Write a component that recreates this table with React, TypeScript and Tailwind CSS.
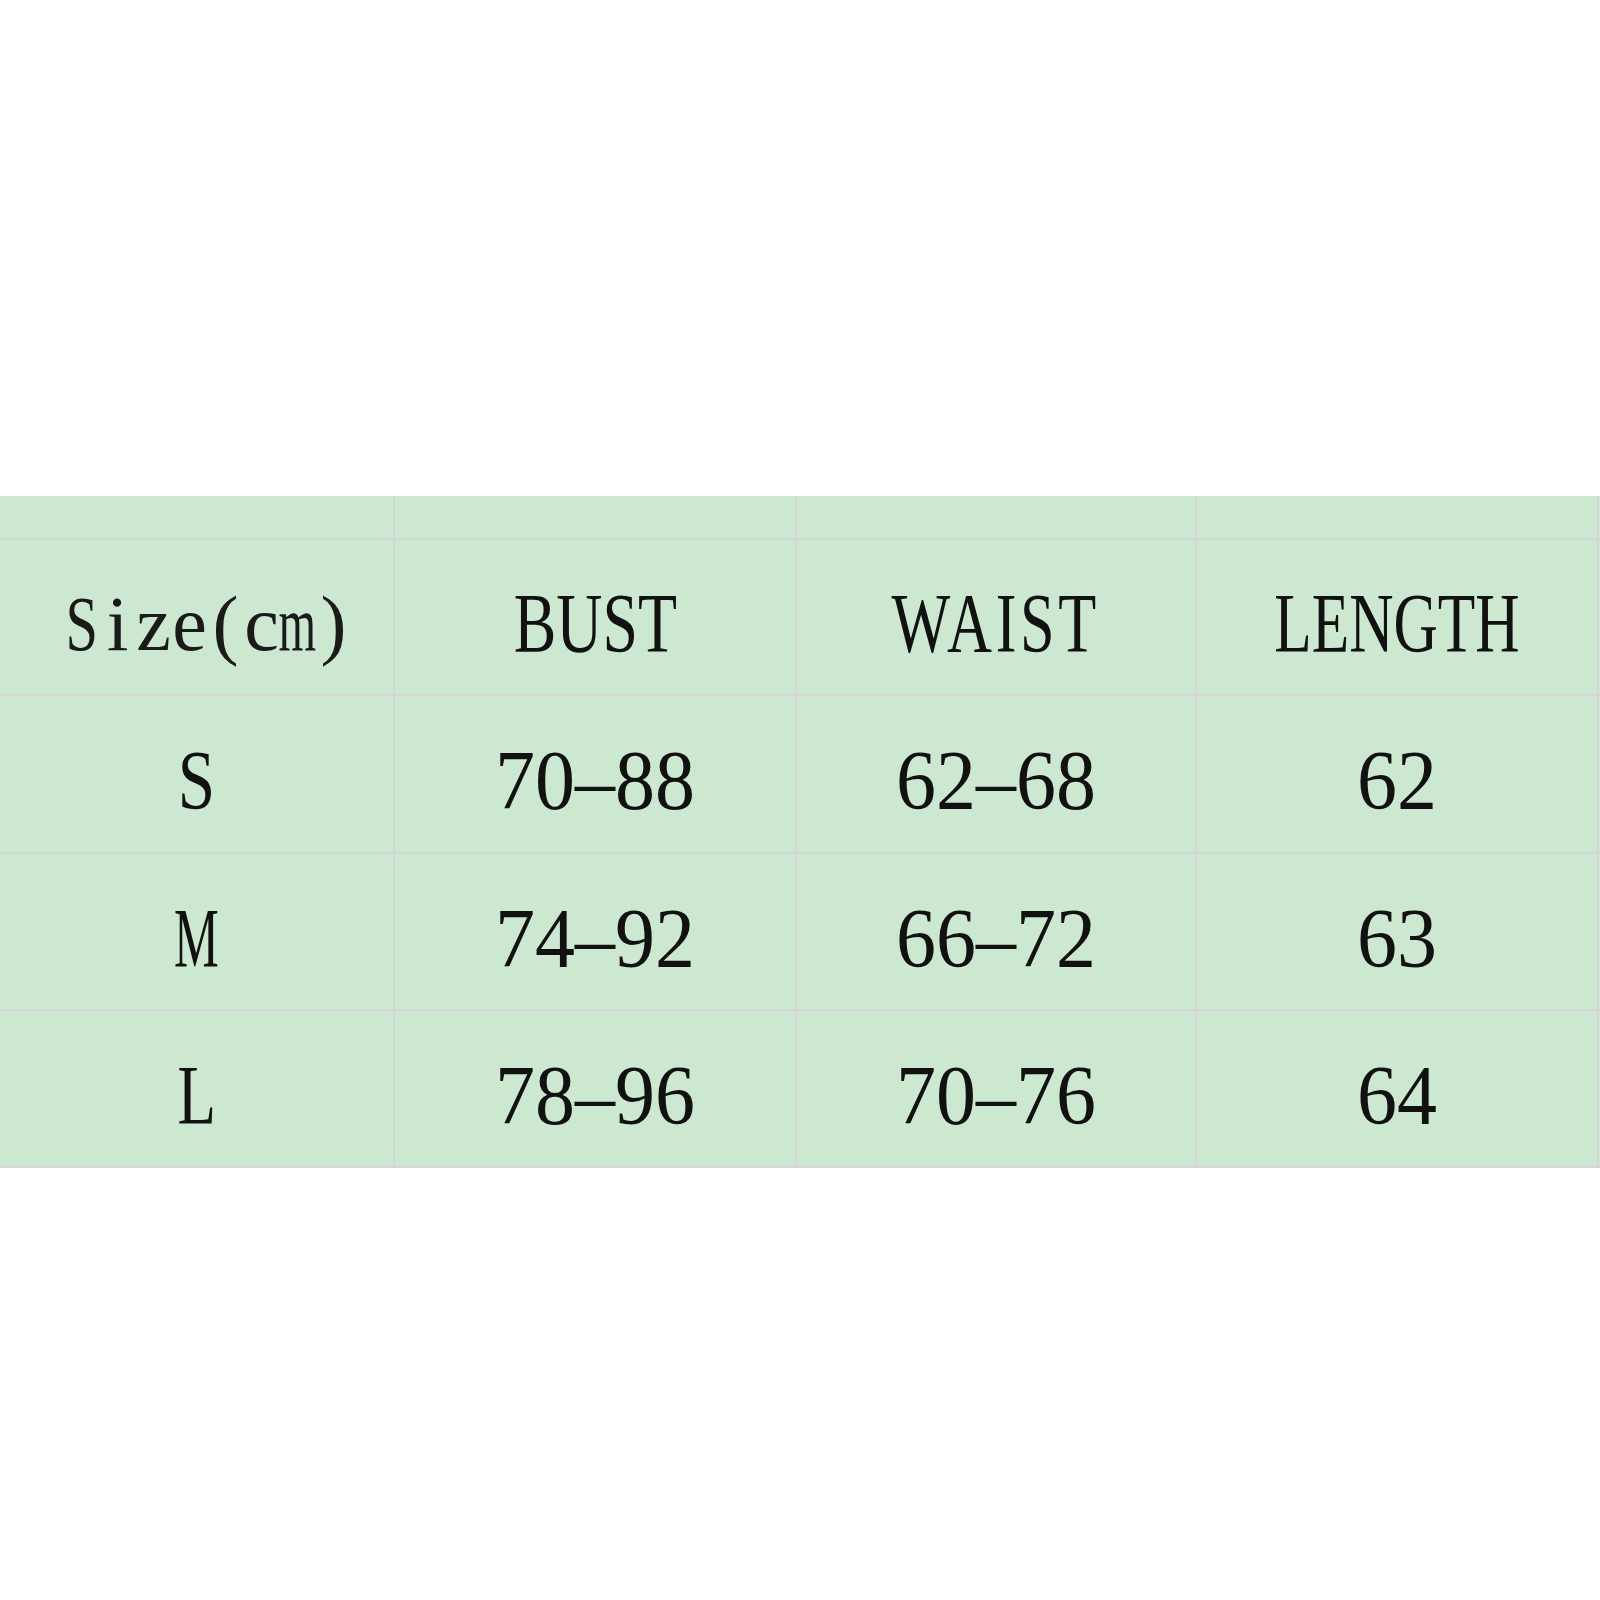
const rows = [
  { size: "S", sx: "scale-x-[0.8]", bust: "70–88", waist: "62–68", length: "62" },
  { size: "M", sx: "scale-x-[0.6]", bust: "74–92", waist: "66–72", length: "63" },
  { size: "L", sx: "scale-x-[0.75]", bust: "78–96", waist: "70–76", length: "64" },
];

const cols = ["w-[395px]", "w-[402px]", "w-[400px]", "w-[402px]"];

// glyphs of the size header sit in fixed half-width boxes, like the original CJK font
const sizeChars = [
  { ch: "S", sx: "scale-x-[0.75]" },
  { ch: "i", sx: "" },
  { ch: "z", sx: "" },
  { ch: "e", sx: "" },
  { ch: "(", sx: "" },
  { ch: "c", sx: "" },
  { ch: "m", sx: "scale-x-[0.62]" },
  { ch: ")", sx: "" },
];

function Cell({ col, children }: { col: number; children?: React.ReactNode }) {
  return (
    <div
      className={`${cols[col]} shrink-0 h-full flex items-center justify-center border-r-2 border-[#d6d5d8] pt-[14px]`}
    >
      {children}
    </div>
  );
}

function Label({ text, sx = "scale-x-[0.75]", track = "" }: { text: string; sx?: string; track?: string }) {
  return (
    <span className={`inline-block leading-none text-[84px] text-[#111] ${sx} ${track} whitespace-nowrap`}>{text}</span>
  );
}

function Num({ text }: { text: string }) {
  return (
    <span className="inline-block leading-none text-[80px] text-[#111] scale-y-[1.05] whitespace-nowrap">{text}</span>
  );
}

export default function App() {
  return (
    <div className="w-[1600px] h-[1600px] bg-white overflow-hidden" style={{ fontFamily: '"Liberation Serif", "Times New Roman", serif' }}>
      <div className="mt-[496px] bg-[#cde8d1]">
        <div className="flex h-[44px] border-b-2 border-[#d6d5d8]">
          <Cell col={0} />
          <Cell col={1} />
          <Cell col={2} />
          <Cell col={3} />
        </div>
        <div className="flex h-[156px] border-b-2 border-[#d6d5d8]">
          <Cell col={0}>
            <span className="flex pl-[22px] leading-none text-[78px] text-[#1a1a1a] whitespace-nowrap">
              {sizeChars.map((c, i) => (
                <span key={i} className="w-[36px] flex justify-center">
                  <span className={`inline-block ${c.sx}`}>{c.ch}</span>
                </span>
              ))}
            </span>
          </Cell>
          <Cell col={1}>
            <Label text="BUST" sx="scale-x-[0.76]" />
          </Cell>
          <Cell col={2}>
            <Label text="WAIST" sx="scale-x-[0.74]" track="tracking-[5px]" />
          </Cell>
          <Cell col={3}>
            <Label text="LENGTH" sx="scale-x-[0.73]" />
          </Cell>
        </div>
        {rows.map((r, i) => (
          <div key={r.size} className={`flex border-b-2 border-[#d6d5d8] ${i === 0 ? "h-[158px]" : "h-[157px]"}`}>
            <Cell col={0}>
              <Label text={r.size} sx={r.sx} />
            </Cell>
            <Cell col={1}>
              <Num text={r.bust} />
            </Cell>
            <Cell col={2}>
              <Num text={r.waist} />
            </Cell>
            <Cell col={3}>
              <Num text={r.length} />
            </Cell>
          </div>
        ))}
      </div>
    </div>
  );
}
